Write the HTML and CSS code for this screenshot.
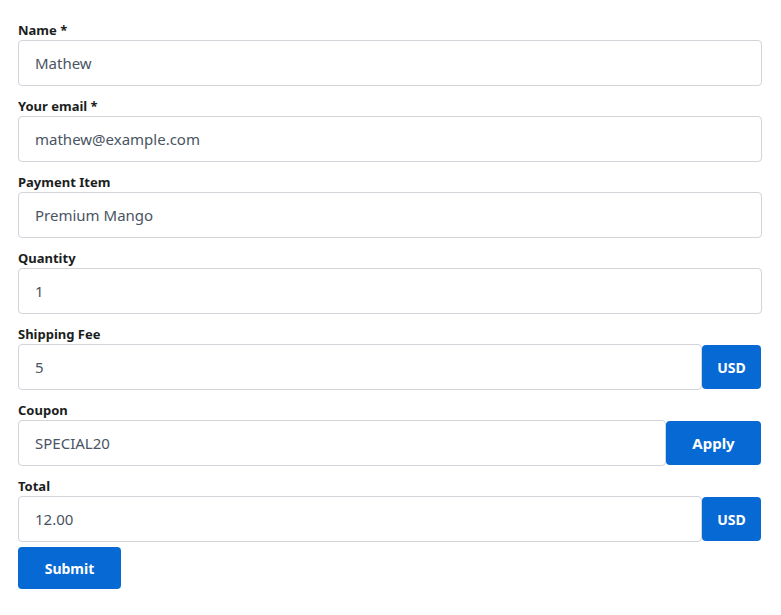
FILE: index.html
```html
<!DOCTYPE html>
<html lang="en">
<head>
<meta charset="utf-8">
<title>Payment form</title>
<link rel="stylesheet" href="styles.css">
</head>
<body>
<form class="pay-form">
  <div class="field">
    <label class="field-label">Name *</label>
    <input class="text-input" type="text" value="Mathew">
  </div>
  <div class="field">
    <label class="field-label">Your email *</label>
    <input class="text-input" type="text" value="mathew@example.com">
  </div>
  <div class="field">
    <label class="field-label">Payment Item</label>
    <input class="text-input" type="text" value="Premium Mango">
  </div>
  <div class="field">
    <label class="field-label">Quantity</label>
    <input class="text-input" type="text" value="1">
  </div>
  <div class="field">
    <label class="field-label">Shipping Fee</label>
    <div class="input-group">
      <input class="text-input" type="text" value="5">
      <span class="addon">USD</span>
    </div>
  </div>
  <div class="field">
    <label class="field-label">Coupon</label>
    <div class="input-group">
      <input class="text-input" type="text" value="SPECIAL20">
      <button class="btn btn-apply" type="button">Apply</button>
    </div>
  </div>
  <div class="field">
    <label class="field-label">Total</label>
    <div class="input-group">
      <input class="text-input" type="text" value="12.00">
      <span class="addon">USD</span>
    </div>
  </div>
  <button class="btn btn-submit" type="button">Submit</button>
</form>
</body>
</html>
```
FILE: styles.css
```css
html, body {
  margin: 0;
  padding: 0;
  background: #ffffff;
}

body {
  font-family: "Noto Sans", "Open Sans", sans-serif;
  color: #212529;
}

.pay-form {
  padding: 20px 19px 0 18px;
  display: flex;
  flex-direction: column;
  align-items: flex-start;
}

.field {
  width: 100%;
  display: flex;
  flex-direction: column;
  margin-bottom: 10px;
}

.field:last-of-type {
  margin-bottom: 5px;
}

.field-label {
  font-size: 13px;
  font-weight: 700;
  line-height: 20px;
  color: #1b1e21;
}

.text-input {
  box-sizing: border-box;
  width: 100%;
  height: 46px;
  padding: 0 16px;
  border: 1px solid #d2d4da;
  border-radius: 4px;
  font-family: inherit;
  font-size: 15px;
  color: #495463;
  background: #ffffff;
  outline: none;
}

.input-group {
  display: flex;
  align-items: center;
}

.input-group .text-input {
  flex: 1;
  min-width: 0;
}

.addon,
.btn {
  box-sizing: border-box;
  display: flex;
  align-items: center;
  justify-content: center;
  height: 44px;
  background: #0769d3;
  color: #ffffff;
  border: none;
  border-radius: 4px;
  font-family: inherit;
  font-size: 14px;
  font-weight: 700;
}

.input-group .addon,
.input-group .btn {
  margin-right: 1px;
}

.addon {
  width: 59px;
}

.btn-apply {
  width: 95px;
  font-size: 15px;
}

.btn-submit {
  width: 103px;
  height: 42px;
}
```
